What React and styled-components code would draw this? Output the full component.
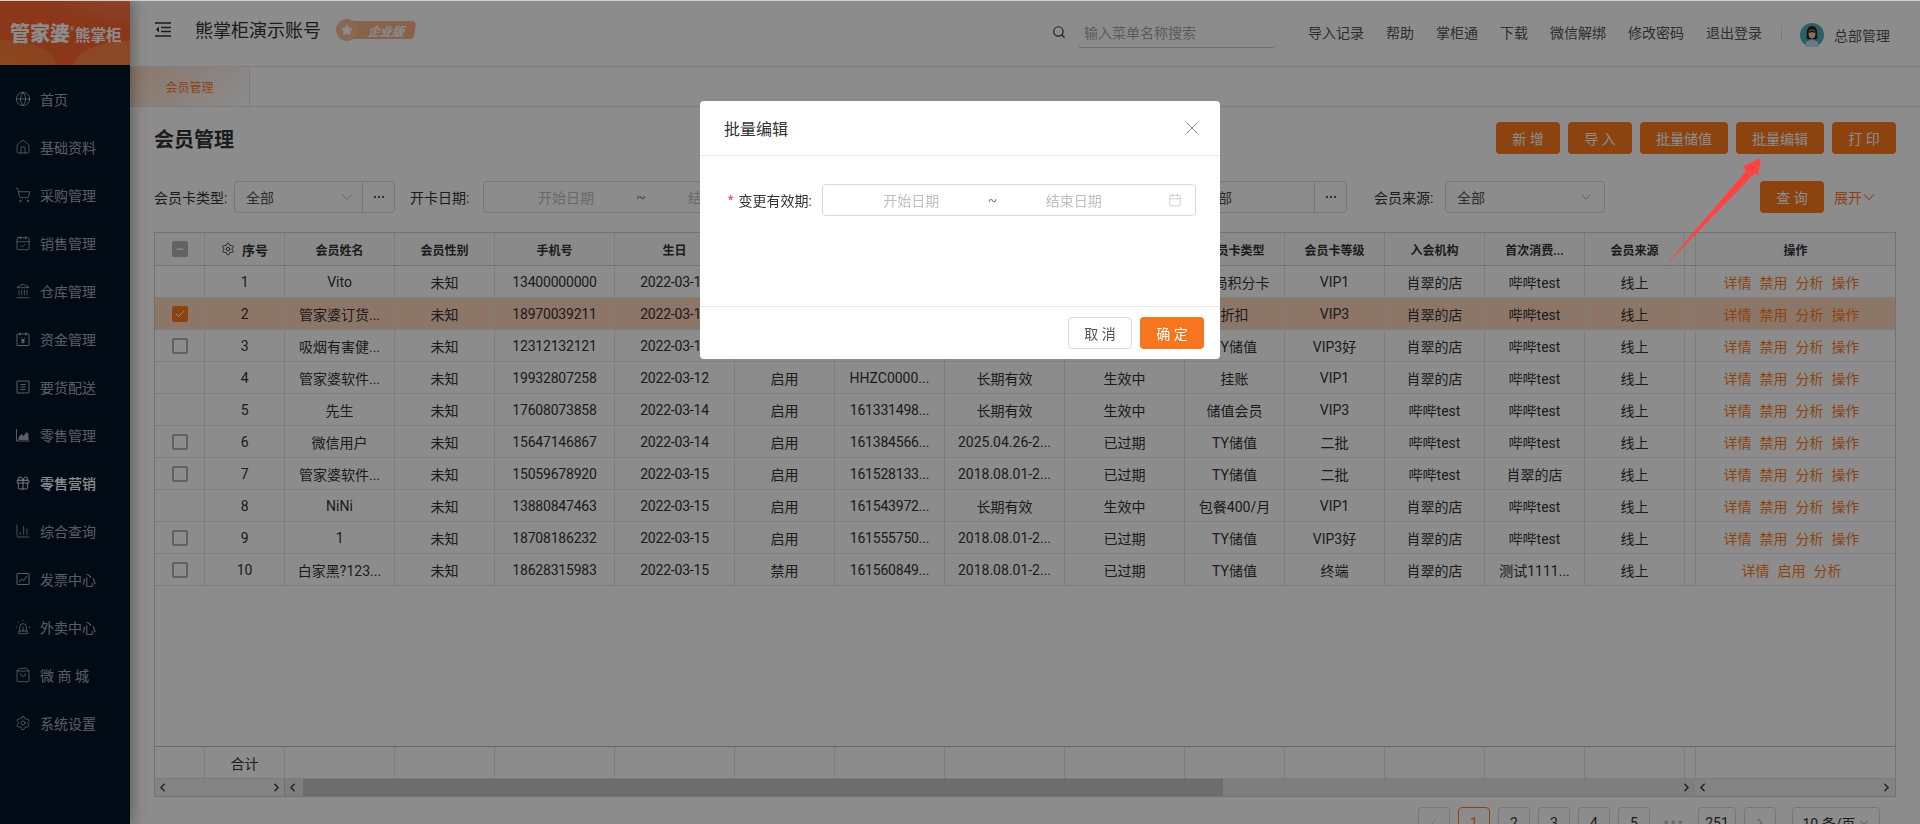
import React from 'react';
import styled, { createGlobalStyle } from 'styled-components';
import {
  Globe, House, ShoppingCart, CalendarCheck, Landmark, Gift, ChartColumn,
  Siren, ShoppingBag, Settings, Search, Calendar, X, ChevronDown, ChevronLeft, ChevronRight, Star, Check, Minus, Ellipsis,
} from 'lucide-react';

const orange = '#ff7a1e';
const font = '"Roboto", "Noto Sans CJK SC", sans-serif';

const Global = createGlobalStyle`
  html, body { margin: 0; padding: 0; height: 100%; overflow: hidden; background: #fff; }
  body { font-family: ${font}; font-size: 14px; color: #333; }
  * { box-sizing: border-box; }
`;

const Page = styled.div`display: flex; height: 824px; overflow: hidden;`;
const TopLine = styled.div`position: fixed; top: 0; left: 0; right: 0; height: 1px; background: #d0d0d0; z-index: 30;`;

const Sidebar = styled.aside`
  width: 130px; flex: none; background: #001529; display: flex; flex-direction: column;
  box-shadow: 2px 0 14px rgba(0,0,0,.35); z-index: 2;
`;
const Logo = styled.div`
  height: 65px; display: flex; align-items: center; padding-left: 10px; color: #fff; white-space: nowrap;
  background:
    radial-gradient(70% 60% at 100% 100%, rgba(255,190,110,.35) 0%, rgba(255,190,110,.35) 60%, transparent 62%),
    radial-gradient(60% 55% at 0% 100%, rgba(255,170,70,.45) 0%, rgba(255,170,70,.3) 70%, transparent 72%),
    radial-gradient(60% 40% at 95% 0%, rgba(255,180,150,.3) 0%, transparent 100%),
    #fb6530;
`;
const LogoMain = styled.span`font-size: 20px; font-weight: 900; position: relative;`;
const LogoMark = styled.sup`font-size: 5px; line-height: 0; vertical-align: 10px; font-weight: 400;`;
const LogoSub = styled.span`font-size: 15.5px; font-weight: 700; margin-left: 1px; margin-top: 2px;`;
const Menu = styled.nav`padding-top: 10px; display: flex; flex-direction: column;`;
const MenuItem = styled.div`
  height: 48px; display: flex; align-items: center; gap: 9px; padding-left: 15px; font-size: 14px;
  color: ${p => (p.$active ? '#fff' : 'rgba(255,255,255,.65)')};
  font-weight: ${p => (p.$active ? 500 : 400)};
  & svg { flex: none; }
`;

const Main = styled.div`flex: 1; min-width: 0; display: flex; flex-direction: column;`;
const Header = styled.header`
  height: 67px; flex: none; display: flex; align-items: center; padding: 0 30px 0 25px; border-bottom: 1px solid #e4e4e4;
`;
const MenuToggle = styled.svg`width: 16px; height: 15px; flex: none; margin-top: -8px;`;
const AccountName = styled.div`font-size: 18px; color: #333; margin-left: 24px; margin-top: -8px;`;
const Badge = styled.div`display: flex; align-items: center; margin-left: 15px; margin-top: -7px;`;
const BadgeDot = styled.div`
  width: 22px; height: 22px; border-radius: 50%; background: #f9bd98; display: flex; align-items: center; justify-content: center; z-index: 1;
`;
const BadgePill = styled.div`
  width: 64px; height: 18px; margin-left: -7px; background: #f8b48a; border-radius: 2px 4px 4px 0; transform: skewX(-8deg);
  display: flex; align-items: center; justify-content: center; color: #fff; font-size: 12px; font-style: italic; font-weight: 700; padding-left: 6px;
`;
const SearchBox = styled.div`display: flex; align-items: center; margin-left: auto; margin-right: 32px; margin-top: -2px; color: #333;`;
const SearchField = styled.div`
  width: 198px; height: 31px; margin-left: 12px; padding-left: 6px; border-bottom: 1px solid #c8c8c8; border-radius: 0 0 4px 4px;
  display: flex; align-items: center; color: #a8a8a8; font-size: 14px;
`;
const NavLinks = styled.div`display: flex; gap: 22px; color: #555; margin-top: -2px;`;
const Sep = styled.div`width: 1px; height: 14px; background: #dedede; margin: 0 18px 0 19px;`;
const Avatar = styled.svg`width: 24px; height: 24px; flex: none; margin-top: 3px;`;
const UserName = styled.div`margin-left: 10px; color: #555; margin-top: 3px;`;

const TabBar = styled.div`height: 40px; flex: none; display: flex; border-bottom: 1px solid #e4e4e4;`;
const Tab = styled.div`
  width: 120px; display: flex; align-items: center; justify-content: center; font-size: 12px; color: ${orange};
  background: linear-gradient(135deg, #ffd9bd 0%, #fbece2 50%, #ffffff 100%); border-right: 1px solid #e4e4e4;
`;

const Content = styled.main`flex: 1; padding: 15px 24px 0; min-height: 0;`;
const TitleRow = styled.div`display: flex; align-items: center; justify-content: space-between; height: 32px;`;
const Title = styled.h1`margin: 0; font-size: 20px; font-weight: 700; color: #333;`;
const Actions = styled.div`display: flex; gap: 8px;`;
const Btn = styled.button`
  height: 32px; min-width: 64px; padding: 0 16px; border-radius: 4px; border: none;
  background: ${orange}; color: #fff; font: inherit; font-size: 14px; white-space: nowrap;
`;
const QueryBtn = styled(Btn)`margin-left: 155px; flex: none;`;
const FilterRow = styled.div`display: flex; align-items: center; height: 32px; margin-top: 27px;`;
const Label = styled.div`
  white-space: nowrap; color: #333; flex: none; width: ${p => p.$w}px; margin-left: ${p => p.$ml || 0}px;
`;
const SelectBox = styled.div`
  width: ${p => p.$w}px; height: 32px; border: 1px solid #d9d9d9; border-radius: 4px; display: flex; align-items: center;
  padding-left: 11px; color: #555; flex: none;
`;
const SelectChevron = styled.span`margin-left: auto; margin-right: ${p => p.$mr ?? 9}px; display: flex; color: #999;`;
const SelectMore = styled.span`
  width: 32px; height: 30px; border-left: 1px solid #d9d9d9; display: flex; align-items: center; justify-content: center; color: #555; flex: none;
`;
const DateRange = styled.div`
  width: ${p => p.$w}px; height: 32px; border: 1px solid #d9d9d9; border-radius: 4px; display: flex; align-items: center;
  color: #bfbfbf; flex: none; padding-left: 14px;
`;
const DatePart = styled.span`flex: 1; text-align: center;`;
const DateTilde = styled.span`flex: none; width: 14px; text-align: center; color: #888;`;
const DateIcon = styled.span`flex: none; width: 47px; padding-left: 20px; display: flex; color: #bfbfbf;`;
const Expand = styled.div`display: flex; align-items: center; margin-left: 10px; color: ${orange}; flex: none;`;
const ExpandIcon = styled(ChevronDown)`margin-left: -3px;`;

const Table = styled.div`
  margin-top: 19px; width: 1742px; height: 565px; border: 1px solid #cfcfcf; display: flex; flex-direction: column;
`;
const cols = '50px 80px 110px 100px 120px 120px 100px 110px 120px 120px 100px 100px 100px 100px 100px 11px 199px';
const HeadRow = styled.div`
  display: grid; grid-template-columns: ${cols}; height: 33px; flex: none; border-bottom: 1px solid #cfcfcf; background: #fcfcfc;
`;
const Row = styled.div`
  display: grid; grid-template-columns: ${cols}; height: 32px; flex: none; border-bottom: 1px solid #e6e6e6;
  background: ${p => (p.$on ? '#ffd8bd' : '#fff')};
`;
const Cell = styled.div`
  display: flex; align-items: center; justify-content: center; gap: ${p => p.$gap || 0}px; min-width: 0; white-space: nowrap;
  border-right: 1px solid #e6e6e6; color: #333;
  padding-right: ${p => p.$pr || 0}px;
  font-size: ${p => (p.$head ? (p.$big ? '13px' : '12px') : '14px')};
  font-weight: ${p => (p.$head ? 700 : 400)};
  letter-spacing: ${p => (p.$num ? '-0.2px' : '0')};
  &:last-child { border-right: none; }
`;
const Spacer = styled.div`flex: 1;`;
const Foot = styled.div`
  display: grid; grid-template-columns: ${cols}; height: 33px; flex: none; border-top: 1px solid #bdbdbd; border-bottom: 1px solid #e0e0e0;
`;
const ScrollRow = styled.div`display: flex; height: 17px; flex: none; background: #e6e6e6;`;
const ScrollPane = styled.div`
  width: ${p => p.$w}px; flex: ${p => (p.$w ? 'none' : 1)}; display: flex; align-items: center; justify-content: space-between;
  border-right: 1px solid ${p => (p.$line ? '#cfcfcf' : 'transparent')}; color: #444; padding: 0 1px;
  background: ${p => (p.$plain ? '#efefef' : 'transparent')};
`;
const Thumb = styled.div`flex: none; height: 17px; width: ${p => p.$w}px; background: #c6c6c6; margin-left: 4px; margin-right: auto;`;
const Check2 = styled.div`
  width: 16px; height: 16px; border-radius: 2px; display: flex; align-items: center; justify-content: center;
  border: 2px solid ${p => (p.$checked ? orange : '#b4b4b4')};
  background: ${p => (p.$checked ? orange : p.$mixed ? '#b4b4b4' : '#fff')}; color: #fff;
`;
const Link = styled.a`color: ${orange}; font-size: 14px;`;

const Pager = styled.div`display: flex; gap: 8px; margin-top: 10px; justify-content: flex-end; width: 1742px; padding-right: 16px;`;
const PageBtn = styled.div`
  width: ${p => (p.$wide ? 38 : 32)}px; height: 32px; border: 1px solid ${p => (p.$on ? orange : '#d9d9d9')}; border-radius: 4px;
  display: flex; align-items: center; justify-content: center; color: ${p => (p.$on ? orange : '#333')}; flex: none;
`;
const PageDots = styled.div`width: 32px; height: 32px; display: flex; align-items: center; justify-content: center; color: #bbb; letter-spacing: 2px; font-size: 14px; font-weight: 700;`;
const PageSize = styled(PageBtn)`width: 88px; margin-left: 8px; gap: 2px; color: #333;`;

const Overlay = styled.div`position: fixed; inset: 0; background: rgba(0,0,0,.45); z-index: 10;`;
const Modal = styled.div`
  position: fixed; top: 101px; left: 700px; width: 520px; height: 258px; background: #fff; border-radius: 4px; z-index: 11;
  display: flex; flex-direction: column;
`;
const ModalHead = styled.div`
  height: 55px; flex: none; display: flex; align-items: center; justify-content: space-between; padding: 0 18px 0 24px;
  border-bottom: 1px solid #e8e8e8; font-size: 16px; color: #333;
`;
const ModalBody = styled.div`flex: 1; padding: 28px 24px 0 28px; display: flex; align-items: flex-start;`;
const Required = styled.span`color: #f5222d; margin-right: 5px; font-family: "Liberation Sans", sans-serif;`;
const FieldLabel = styled.div`height: 32px; display: flex; align-items: center; white-space: nowrap; color: #333; width: 94px;`;
const ModalFoot = styled.div`
  height: 53px; flex: none; display: flex; justify-content: flex-end; align-items: center; gap: 8px; padding: 0 16px; border-top: 1px solid #e8e8e8;
`;
const Ghost = styled.button`
  height: 32px; width: 64px; border: 1px solid #d9d9d9; border-radius: 4px; background: #fff; color: #555; font: inherit;
`;
const Primary = styled.button`
  height: 32px; width: 64px; border: none; border-radius: 4px; background: #f7751f; color: #fff; font: inherit;
`;
const ArrowSvg = styled.svg`position: fixed; left: 1655px; top: 150px; width: 115px; height: 125px; z-index: 12;`;

const Ico = ({ children }) => (
  <svg width="16" height="16" viewBox="0 0 16 16" fill="none" stroke="currentColor" strokeWidth="1">{children}</svg>
);
const MoneyIcon = () => (
  <Ico><rect x="2" y="3" width="12" height="11.5" rx=".5" /><path d="M5 1.5v3M11 1.5v3M5.8 6.5 8 9l2.2-2.5M8 9v3.5M6 9.5h4M6 11.2h4" /></Ico>
);
const ListIcon = () => (
  <Ico><rect x="2" y="2" width="12" height="12" rx=".5" /><path d="M5.5 5.5h5M5.5 8h5M5.5 10.5h5" /></Ico>
);
const AreaIcon = () => (
  <Ico><path d="M1.5 2v12h13" /><path d="M3.5 13V10l3-3 2 2 3-4 2 2v6z" fill="currentColor" stroke="none" /></Ico>
);
const ChartBoxIcon = () => (
  <Ico><rect x="2" y="2.5" width="12" height="11" rx=".5" /><path d="M4 11l2.5-3 2 1.5L12 5" /></Ico>
);

const menu = [
  [Globe, '首页'], [House, '基础资料'], [ShoppingCart, '采购管理'], [CalendarCheck, '销售管理'], [Landmark, '仓库管理'],
  [MoneyIcon, '资金管理'], [ListIcon, '要货配送'], [AreaIcon, '零售管理'], [Gift, '零售营销'], [ChartColumn, '综合查询'],
  [ChartBoxIcon, '发票中心'], [Siren, '外卖中心'], [ShoppingBag, '微 商 城'], [Settings, '系统设置'],
];
const links = ['导入记录', '帮助', '掌柜通', '下载', '微信解绑', '修改密码', '退出登录'];
const heads = ['序号', '会员姓名', '会员性别', '手机号', '生日', '会员状态', '会员卡号', '有效期', '卡状态', '会员卡类型', '会员卡等级', '入会机构', '首次消费...', '会员来源'];
const XC = '肖翠的店', BB = '哔哔test', LQ = '长期有效', SX = '生效中', GQ = '已过期', DT = '2018.08.01-2...';
const rows = [
  { box: 0, d: ['1', 'Vito', '未知', '13400000000', '2022-03-11', '启用', '161320021...', LQ, SX, '全局积分卡', 'VIP1', XC, BB, '线上'] },
  { box: 2, d: ['2', '管家婆订货...', '未知', '18970039211', '2022-03-11', '启用', '161320098...', LQ, SX, '折扣', 'VIP3', XC, BB, '线上'] },
  { box: 1, d: ['3', '吸烟有害健...', '未知', '12312132121', '2022-03-11', '启用', '161320127...', LQ, SX, 'TY储值', 'VIP3好', XC, BB, '线上'] },
  { box: 0, d: ['4', '管家婆软件...', '未知', '19932807258', '2022-03-12', '启用', 'HHZC0000...', LQ, SX, '挂账', 'VIP1', XC, BB, '线上'] },
  { box: 0, d: ['5', '先生', '未知', '17608073858', '2022-03-14', '启用', '161331498...', LQ, SX, '储值会员', 'VIP3', BB, BB, '线上'] },
  { box: 1, d: ['6', '微信用户', '未知', '15647146867', '2022-03-14', '启用', '161384566...', '2025.04.26-2...', GQ, 'TY储值', '二批', BB, BB, '线上'] },
  { box: 1, d: ['7', '管家婆软件...', '未知', '15059678920', '2022-03-15', '启用', '161528133...', DT, GQ, 'TY储值', '二批', BB, XC, '线上'] },
  { box: 0, d: ['8', 'NiNi', '未知', '13880847463', '2022-03-15', '启用', '161543972...', LQ, SX, '包餐400/月', 'VIP1', XC, BB, '线上'] },
  { box: 1, d: ['9', '1', '未知', '18708186232', '2022-03-15', '启用', '161555750...', DT, GQ, 'TY储值', 'VIP3好', XC, BB, '线上'] },
  { box: 1, d: ['10', '白家黑?123...', '未知', '18628315983', '2022-03-15', '禁用', '161560849...', DT, GQ, 'TY储值', '终端', XC, '测试1111...', '线上'], ops: ['详情', '启用', '分析'] },
];
const defaultOps = ['详情', '禁用', '分析', '操作'];

const Range = ({ w }) => (
  <DateRange $w={w}>
    <DatePart>开始日期</DatePart><DateTilde>~</DateTilde><DatePart>结束日期</DatePart>
    <DateIcon><Calendar size={14} strokeWidth={1.25} /></DateIcon>
  </DateRange>
);

export default function App() {
  return (
    <Page>
      <Global />
      <TopLine />
      <Sidebar>
        <Logo><LogoMain>管家婆<LogoMark>®</LogoMark></LogoMain><LogoSub>熊掌柜</LogoSub></Logo>
        <Menu>
          {menu.map(([I, t]) => (
            <MenuItem key={t} $active={t === '零售营销'}>
              <I size={16} strokeWidth={1.25} />
              <span>{t}</span>
            </MenuItem>
          ))}
        </Menu>
      </Sidebar>
      <Main>
        <Header>
          <MenuToggle viewBox="0 0 16 15" fill="none" stroke="#333" strokeWidth="1.3">
            <path d="M0 1h16M6 5.5h10M6 9.5h10M0 14h16" />
            <path d="M4 4.5 1 7.5l3 3z" fill="#333" stroke="none" />
          </MenuToggle>
          <AccountName>熊掌柜演示账号</AccountName>
          <Badge>
            <BadgeDot><Star size={12} fill="#fff" color="#fff" /></BadgeDot>
            <BadgePill>企业版</BadgePill>
          </Badge>
          <SearchBox>
            <Search size={14} />
            <SearchField>输入菜单名称搜索</SearchField>
          </SearchBox>
          <NavLinks>{links.map(l => <span key={l}>{l}</span>)}</NavLinks>
          <Sep />
          <Avatar viewBox="0 0 24 24">
            <circle cx="12" cy="12" r="12" fill="#4fb0b8" />
            <path d="M5 24c0-5 3-7 7-7s7 2 7 7z" fill="#bfdde3" />
            <path d="M7 16c-1-8 0-13 5-13s6 5 5 13c-2 1-3 0-3 0h-4s-1 1-3 0z" fill="#2b2320" />
            <ellipse cx="12" cy="11" rx="3.4" ry="4.4" fill="#f6cdb2" />
            <path d="M8.5 10c1-3 5-4 7 0-2-1-5-1-7 0z" fill="#2b2320" />
          </Avatar>
          <UserName>总部管理</UserName>
        </Header>
        <TabBar><Tab>会员管理</Tab></TabBar>
        <Content>
          <TitleRow>
            <Title>会员管理</Title>
            <Actions>
              <Btn>新 增</Btn><Btn>导 入</Btn><Btn>批量储值</Btn><Btn>批量编辑</Btn><Btn>打 印</Btn>
            </Actions>
          </TitleRow>
          <FilterRow>
            <Label $w={80}>会员卡类型:</Label>
            <SelectBox $w={161}>全部<SelectChevron $mr={6}><ChevronDown size={18} strokeWidth={1} /></SelectChevron><SelectMore><Ellipsis size={14} /></SelectMore></SelectBox>
            <Label $ml={15} $w={73}>开卡日期:</Label>
            <Range w={349} />
            <Label $ml={282} $w={78}>开卡机构:</Label>
            <SelectBox $w={155}>全部<SelectChevron $mr={0} /><SelectMore><Ellipsis size={14} /></SelectMore></SelectBox>
            <Label $ml={27} $w={71}>会员来源:</Label>
            <SelectBox $w={160}>全部<SelectChevron><ChevronDown size={18} strokeWidth={1} /></SelectChevron></SelectBox>
            <QueryBtn>查 询</QueryBtn>
            <Expand>展开<ExpandIcon size={20} strokeWidth={1.25} /></Expand>
          </FilterRow>
          <Table>
            <HeadRow>
              <Cell $head><Check2 $mixed><Minus size={10} strokeWidth={3} /></Check2></Cell>
              {heads.map((h, i) => (
                <Cell $head key={h} $big={i === 0} $gap={i === 0 ? 7 : 0}>
                  {i === 0 && <Settings size={14} strokeWidth={1.5} />}{h}
                </Cell>
              ))}
              <Cell $head />
              <Cell $head>操作</Cell>
            </HeadRow>
            {rows.map((r, ri) => (
              <Row key={ri} $on={r.box === 2}>
                <Cell>{r.box === 1 && <Check2 />}{r.box === 2 && <Check2 $checked><Check size={12} strokeWidth={2} /></Check2>}</Cell>
                {r.d.map((v, i) => <Cell key={i} $num={/^[\d-]+$/.test(v) || /^\d+\.\.\.$/.test(v)}>{v}</Cell>)}
                <Cell />
                <Cell $gap={8} $pr={8}>{(r.ops || defaultOps).map(o => <Link key={o}>{o}</Link>)}</Cell>
              </Row>
            ))}
            <Spacer />
            <Foot>
              <Cell /><Cell>合计</Cell>
              {heads.slice(1).map(h => <Cell key={h} />)}
              <Cell /><Cell />
            </Foot>
            <ScrollRow>
              <ScrollPane $w={130} $line $plain><ChevronLeft size={13} strokeWidth={3} /><ChevronRight size={13} strokeWidth={3} /></ScrollPane>
              <ScrollPane>
                <ChevronLeft size={13} strokeWidth={3} />
                <Thumb $w={920} />
                <ChevronRight size={13} strokeWidth={3} />
              </ScrollPane>
              <ScrollPane $w={200} $plain><ChevronLeft size={13} strokeWidth={3} /><ChevronRight size={13} strokeWidth={3} /></ScrollPane>
            </ScrollRow>
          </Table>
          <Pager>
            <PageBtn><ChevronLeft size={14} strokeWidth={1} color="#bbb" /></PageBtn>
            <PageBtn $on>1</PageBtn><PageBtn>2</PageBtn><PageBtn>3</PageBtn><PageBtn>4</PageBtn><PageBtn>5</PageBtn>
            <PageDots>•••</PageDots>
            <PageBtn $wide>251</PageBtn>
            <PageBtn><ChevronRight size={14} strokeWidth={1} /></PageBtn>
            <PageSize>10 条/页<ChevronDown size={12} strokeWidth={1} /></PageSize>
          </Pager>
        </Content>
      </Main>
      <Overlay />
      <Modal>
        <ModalHead>批量编辑<X size={20} strokeWidth={1.1} color="#777" /></ModalHead>
        <ModalBody>
          <FieldLabel><Required>*</Required>变更有效期:</FieldLabel>
          <Range w={374} />
        </ModalBody>
        <ModalFoot><Ghost>取 消</Ghost><Primary>确 定</Primary></ModalFoot>
      </Modal>
      <ArrowSvg viewBox="0 0 115 125">
        <path d="M8 118 L91 21 L88 16 L106 8 L103 26 L100 23 Z" fill="#ff4343" />
      </ArrowSvg>
    </Page>
  );
}
